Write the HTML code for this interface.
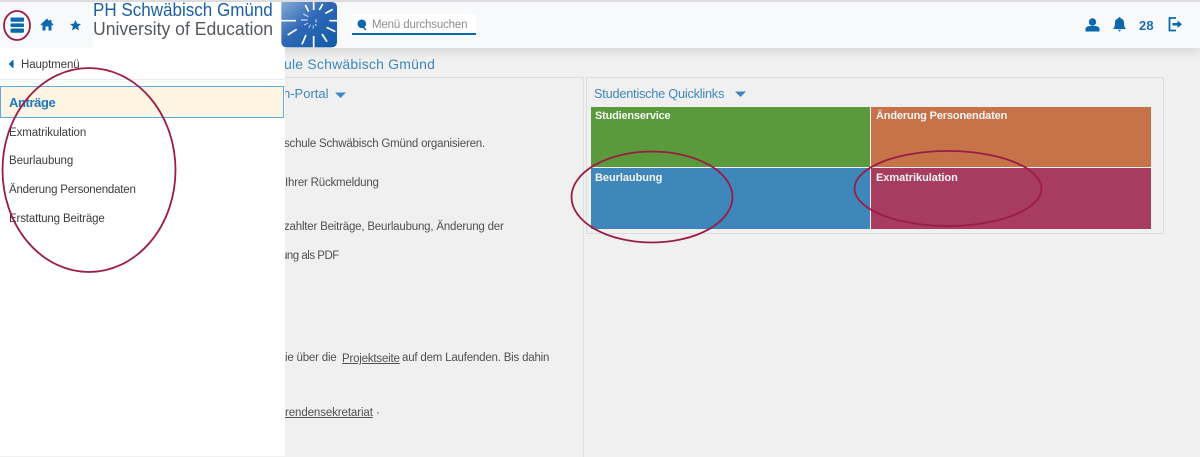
<!DOCTYPE html>
<html lang="de"><head><meta charset="utf-8"><title>PH Schwäbisch Gmünd</title>
<style>
html,body{margin:0;padding:0}
body{width:1200px;height:456px;position:relative;overflow:hidden;background:#f0f0f0;font-family:"Liberation Sans",sans-serif;color:#4a4a4a}
.a{position:absolute;white-space:nowrap;line-height:1}
.b{position:absolute}
.t{font-size:11.5px;letter-spacing:-.2px;color:#505050}
.m{font-size:11.5px;color:#3c3c3c;left:9px}
.q{font-size:11px;font-weight:bold;letter-spacing:-.05px;color:#f4f4f4}
.h{color:#3f87ba}
</style></head><body>
<div class="b" style="left:0;top:0;width:1200px;height:2px;background:#e3e3e5"></div>
<div class="b" style="left:0;top:2px;width:1200px;height:46px;background:#f8f9fb;box-shadow:0 3px 10px rgba(0,0,0,.12)"></div>

<div class="a h" style="left:284px;top:56.500px;font-size:14px;letter-spacing:.2px">ule Schwäbisch Gmünd</div>
<div class="b" style="left:285px;top:77px;width:298px;height:379px;border-right:1px solid #dedede;border-top:1px solid #dedede"></div>
<div class="a h" style="left:283px;top:87px;font-size:13px">n-Portal</div>
<svg class="b" style="left:335px;top:92px" width="12" height="7"><path d="M0 0.5h11L5.500 6z" fill="#3f87ba"/></svg>
<div class="a t" style="left:284px;top:139px">schule Schwäbisch Gmünd organisieren.</div>
<div class="a t" style="left:285px;top:178px">Ihrer Rückmeldung</div>
<div class="a t" style="left:284px;top:222px">zahlter Beiträge, Beurlaubung, Änderung der</div>
<div class="a t" style="left:281px;top:251px;letter-spacing:-.5px">ung als PDF</div>
<div class="a t" style="left:285px;top:353px">ie über die</div>
<div class="a t" style="left:342px;top:354px;text-decoration:underline">Projektseite</div>
<div class="a t" style="left:402px;top:353px">auf dem Laufenden. Bis dahin</div>
<div class="a t" style="left:285px;top:408px;letter-spacing:-.1px;text-decoration:underline">rendensekretariat</div>
<div class="a t" style="left:376px;top:408px">·</div>

<div class="b" style="left:586px;top:77px;width:578px;height:157px;border:1px solid #dcdcdc;box-sizing:border-box"></div>
<div class="a h" style="left:594px;top:88px;font-size:12.800px;letter-spacing:-.25px">Studentische Quicklinks</div>
<svg class="b" style="left:735px;top:91px" width="12" height="7"><path d="M0 .5h11L5.500 6z" fill="#3f87ba"/></svg>
<div class="b" style="left:591px;top:107px;width:279px;height:60px;background:#5a9a3c"></div>
<div class="b" style="left:871px;top:107px;width:280px;height:60px;background:#c6734a"></div>
<div class="b" style="left:591px;top:168px;width:279px;height:60.500px;background:#3f87ba"></div>
<div class="b" style="left:871px;top:168px;width:280px;height:60.500px;background:#a83c60"></div>
<div class="a q" style="left:595px;top:111px;letter-spacing:-.2px">Studienservice</div>
<div class="a q" style="left:876px;top:111px;letter-spacing:-.15px">Änderung Personendaten</div>
<div class="a q" style="left:595px;top:173px">Beurlaubung</div>
<div class="a q" style="left:876px;top:173px">Exmatrikulation</div>

<!-- sidebar -->
<div class="b" style="left:0;top:48px;width:285px;height:408px;background:#fff"></div>
<div class="b" style="left:0;top:79px;width:285px;height:1px;background:#e3edf5"></div>
<svg class="b" style="left:9px;top:60px" width="5" height="8"><path d="M4 0.500L.5 4 4 7.500z" fill="#0a68b0" stroke="#0a68b0"/></svg>
<div class="a" style="left:21px;top:60px;font-size:11.500px;letter-spacing:-.1px;color:#3c3c3c">Hauptmenü</div>
<div class="b" style="left:0;top:86px;width:284px;height:32px;box-sizing:border-box;background:#fdf4e2;border:1px solid #62a9de"></div>
<div class="a" style="left:9px;top:96px;font-size:13px;font-weight:bold;letter-spacing:-.4px;color:#1f78bd">Anträge</div>
<div class="a m" style="top:128px;letter-spacing:-.1px">Exmatrikulation</div>
<div class="a m" style="top:156px;letter-spacing:-.1px">Beurlaubung</div>
<div class="a m" style="top:185px;letter-spacing:-.2px">Änderung Personendaten</div>
<div class="a m" style="top:214px;letter-spacing:-.15px">Erstattung Beiträge</div>

<!-- header left -->
<div class="b" style="left:93px;top:2px;width:188px;height:46px;background:#fff"></div>
<div class="a" style="left:93px;top:1px;font-size:18.700px;color:#1c5fa3;transform:scaleX(.911);transform-origin:0 0">PH Schwäbisch Gmünd</div>
<div class="a" style="left:93px;top:20px;font-size:18.700px;color:#55595f;transform:scaleX(.942);transform-origin:0 0">University of Education</div>
<svg class="b" style="left:281px;top:1px" width="56" height="47" viewBox="15 3 168 141">
<defs><linearGradient id="g" x1="0" y1="0" x2="1" y2="1"><stop offset="0" stop-color="#86aad8"/><stop offset=".45" stop-color="#2f68b5"/><stop offset="1" stop-color="#0f5aa8"/></linearGradient></defs>
<path d="M16 6H165Q183 6 183 22V124Q183 142 165 142H34Q16 142 16 124Z" fill="url(#g)"/>
<g stroke="#fff" stroke-width="5" fill="none">
<path d="M113 4V30M113 108V144M14 62H60M160 62H185"/>
<path d="M140 12L130 30M170 28L148 40M178 95L152 82M153 125L138 102M78 133L90 105M35 105L62 88M88 15L98 35"/>
<path d="M75 60H95M82 42L97 50" stroke-width="3.500" stroke-opacity=".75"/>
<path d="M84 75L96 70M98 84L104 74M111 86L112 76M122 78L117 72M124 66L118 64M122 58L117 62" stroke-width="3" stroke-opacity=".7"/>
</g></svg>
<svg class="b" style="left:3px;top:10px" width="30" height="32" viewBox="0 0 30 32">
<ellipse cx="14" cy="15.500" rx="13" ry="14.500" fill="none" stroke="#9b1c45" stroke-width="1.800"/>
<rect x="7.500" y="7.500" width="13.500" height="4.300" rx="1" fill="#0a68b0"/><rect x="7.500" y="13.400" width="13.500" height="3.600" rx="1" fill="#0a68b0"/><rect x="7.500" y="18.500" width="13.500" height="4.300" rx="1" fill="#0a68b0"/>
</svg>
<svg class="b" style="left:40px;top:18px" width="14" height="13" viewBox="0 0 14 13"><path d="M7 0.500L0.500 6.500l1 1 1-.9V12.500h3V8.500h3v4h3V6.600l1 .9 1-1-2-1.800V2h-2v1.400z" fill="#0a68b0"/></svg>
<svg class="b" style="left:69.500px;top:20px" width="11" height="11" viewBox="0 0 12 12"><path d="M6 0l1.700 3.900 4.300.4-3.200 2.800 1 4.200L6 9.100 2.200 11.300l1-4.200L0 4.300l4.300-.4z" fill="#0a68b0"/></svg>

<!-- search -->
<div class="b" style="left:352px;top:14px;width:124px;height:19px;background:#fff;border-bottom:2px solid #0a68b0"></div>
<svg class="b" style="left:357px;top:19px" width="11" height="12" viewBox="0 0 11 12"><circle cx="4.800" cy="4.800" r="4.300" fill="#0a68b0"/><path d="M6.500 8.500L9 11" stroke="#0a68b0" stroke-width="1.500"/></svg>
<div class="a" style="left:372px;top:20px;font-size:11.500px;letter-spacing:-.15px;color:#8d8d8d">Menü durchsuchen</div>

<!-- header right -->
<svg class="b" style="left:1085px;top:18px" width="15" height="14" viewBox="0 0 15 14"><circle cx="7.500" cy="4" r="3.700" fill="#0a68b0"/><path d="M0.500 13.500V11q0-2.500 4-3h6q4 .5 4 3v2.500z" fill="#0a68b0"/></svg>
<svg class="b" style="left:1113px;top:17px" width="13" height="15" viewBox="0 0 13 15"><path d="M6.500 0q1 0 1 1.200Q11 2 11 6q0 4 2 6H0q2-2 2-6 0-4 3.500-4.800Q5.500 0 6.500 0zM5 12.800h3L6.500 14.800z" fill="#0a68b0"/></svg>
<div class="a" style="left:1139px;top:19px;font-size:13px;font-weight:bold;letter-spacing:.1px;color:#1a6fb4">28</div>
<svg class="b" style="left:1168px;top:17px" width="15" height="15" viewBox="0 0 15 15"><path d="M8 1H1.500v12.500H8" fill="none" stroke="#0a68b0" stroke-width="1.800"/><path d="M4.500 6h5V3.500L14 7.200 9.500 11V8.500h-5z" fill="#0a68b0"/></svg>

<!-- annotations -->
<svg class="b" style="left:0;top:0" width="1200" height="456" fill="none" stroke="#9b1c45" stroke-width="1.800">
<ellipse cx="89" cy="170" rx="86.500" ry="102"/>
<ellipse cx="652" cy="197" rx="80.500" ry="45.500"/>
<ellipse cx="948" cy="188.500" rx="93.500" ry="37.500"/>
</svg>
</body></html>
